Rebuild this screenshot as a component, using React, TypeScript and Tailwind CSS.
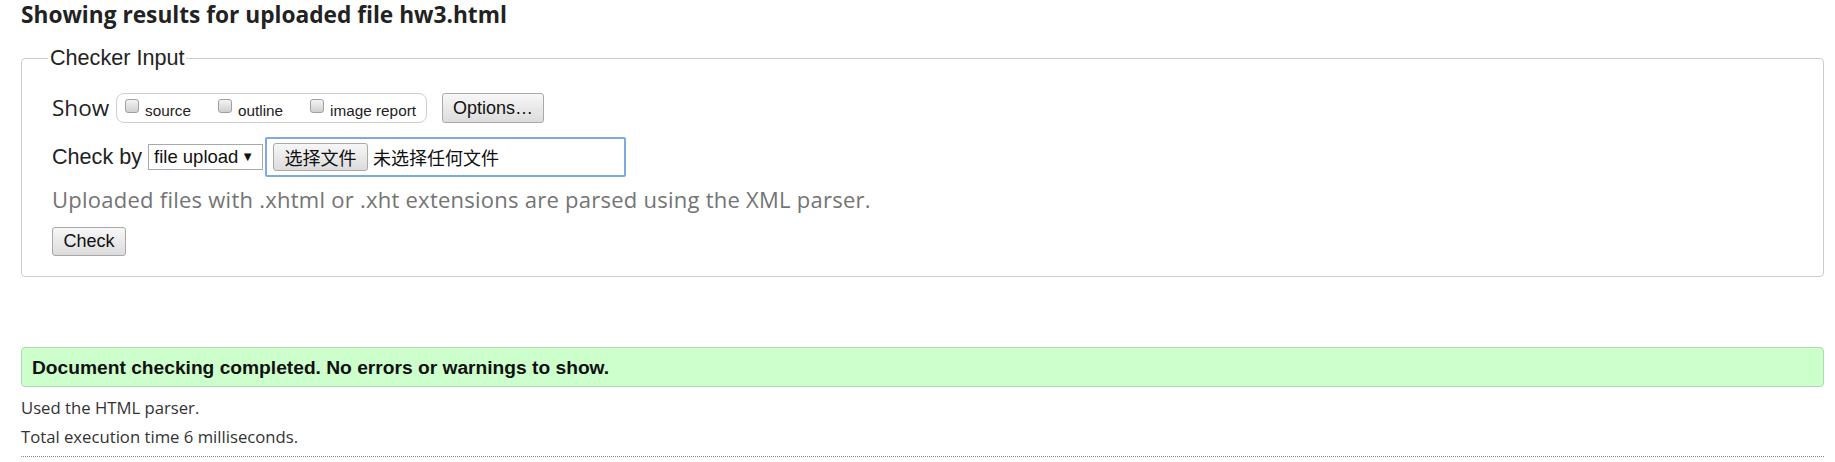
import React from "react";

function Box() {
  return (
    <span className="mb-[4px] inline-block h-[14px] w-[14px] shrink-0 rounded-[3px] border border-[#a0a0a0] bg-gradient-to-b from-[#f4f4f4] to-[#cfcfcf]" />
  );
}

function Opt({ label }: { label: string }) {
  return (
    <label className="flex items-center gap-[6px]">
      <Box />
      <span className="pt-[4px] text-[15.3px] leading-[17px] text-[#222]">{label}</span>
    </label>
  );
}

const btnBase =
  "rounded-[3px] border border-[#a9a9a9] bg-gradient-to-b from-[#f7f7f7] to-[#dcdcdc] text-[#111]";

export default function App() {
  return (
    <div className="h-[462px] w-[1835px] overflow-hidden bg-white pl-[21px] pr-[11px] font-['Liberation_Sans',Arial,sans-serif] text-[#111]">
      <h2 className="font-['Open_Sans',sans-serif] text-[22.7px] font-bold leading-[30px] text-[#222]">
        Showing results for uploaded file hw3.html
      </h2>

      <fieldset className="mt-[16px] rounded-[4px] border border-[#cccccc] pb-[20px] pl-[30px] pr-[20px] pt-[23px]">
        <legend className="ml-[-4px] px-[2px] text-[21.6px] leading-[24px] text-[#222]">Checker Input</legend>

        <div className="flex h-[30px] items-center">
          <span className="font-['Open_Sans',sans-serif] text-[22.5px] leading-[30px] text-[#222]">Show</span>
          <div className="ml-[7px] flex h-[30px] w-[311px] items-center gap-[27px] rounded-[8px] border border-[#cfcfcf] pl-[8px]">
            <Opt label="source" />
            <Opt label="outline" />
            <Opt label="image report" />
          </div>
          <button className={`ml-[15px] h-[30px] w-[102px] font-['Liberation_Sans',Arial,sans-serif] text-[18px] ${btnBase}`}>
            Options…
          </button>
        </div>

        <div className="mt-[14px] flex h-[40px] items-center">
          <span className="text-[21.6px] leading-[24px] text-[#222]">Check by</span>
          <div className="ml-[6px] flex h-[26px] w-[115px] items-center justify-between border border-[#a9a9a9] bg-white pl-[5px] pr-[8px]">
            <span className="text-[18.5px] leading-[20px] text-[#111]">file upload</span>
            <span className="text-[13px] leading-[14px] text-[#111]">▼</span>
          </div>
          <div className="ml-[2px] flex h-[40px] w-[361px] items-center rounded-[2px] border-2 border-[#7eaae2] pl-[6px]">
            <button className={`h-[28px] w-[95px] font-['Noto_Sans_CJK_SC',sans-serif] text-[18px] ${btnBase}`}>
              选择文件
            </button>
            <span className="ml-[5px] font-['Noto_Sans_CJK_SC',sans-serif] text-[18px] leading-[24px] text-[#111]">
              未选择任何文件
            </span>
          </div>
        </div>

        <p className="mt-[8px] font-['Open_Sans',sans-serif] text-[22px] leading-[28px] tracking-[0.25px] text-[#747474]">
          Uploaded files with .xhtml or .xht extensions are parsed using the XML parser.
        </p>

        <button className={`mt-[14px] block h-[29px] w-[74px] font-['Liberation_Sans',Arial,sans-serif] text-[18px] ${btnBase}`}>
          Check
        </button>
      </fieldset>

      <div className="mt-[70px] flex h-[40px] items-center rounded-[4px] border border-[#b5d6b5] bg-[#ccffcc] pl-[10px]">
        <span className="text-[19.2px] font-bold leading-[21px] text-[#111]">
          Document checking completed. No errors or warnings to show.
        </span>
      </div>

      <div className="mt-[6px] font-['Open_Sans',sans-serif] text-[16.7px] leading-[29px] text-[#333]">
        <p>Used the HTML parser.</p>
        <p>Total execution time 6 milliseconds.</p>
      </div>
      <div className="mt-[5px] border-t border-dotted border-[#888]" />
    </div>
  );
}
